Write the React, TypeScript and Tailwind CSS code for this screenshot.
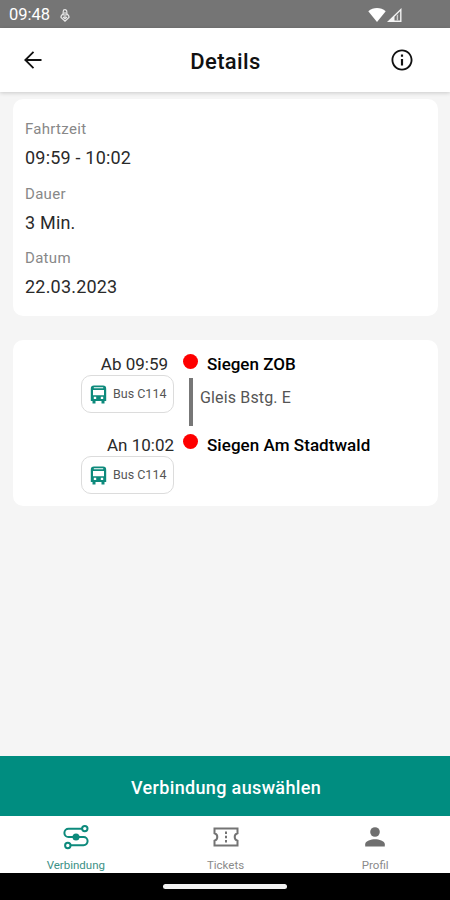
import type { ReactNode } from "react";

const connection = {
  summary: [
    { label: "Fahrtzeit", value: "09:59 - 10:02" },
    { label: "Dauer", value: "3 Min." },
    { label: "Datum", value: "22.03.2023" },
  ],
};

function TouchIcon() {
  return (
    <svg width="10" height="13" viewBox="0 0 10 13" fill="none" stroke="#e8e8e8" strokeWidth="1.2">
      <path d="M3.200 6.500V2.500a1.800 1.800 0 0 1 3.600 0v4M5 3v6" />
      <path d="M3.300 4.800C1.500 5.800.8 7 1 8.500l4 3.600 4-3.600c.2-1.500-.5-2.700-2.300-3.700M3 8l2 1.800L7 8" />
    </svg>
  );
}

function WifiIcon() {
  return (
    <svg width="18" height="14" viewBox="0 0 18 14" fill="#fff">
      <path d="M9 14 .3 3.2C2.8 1.1 5.800 0 9 0s6.200 1.100 8.700 3.200z" />
    </svg>
  );
}

function SignalIcon() {
  return (
    <svg width="15" height="14" viewBox="0 0 15 14">
      <path d="M0 14 14.500 0v14z" fill="#f4f4f4" />
      <path d="M7.500 12.600V8.800l5.600-5.600v9.400z" fill="#757575" />
      <path d="M9.700 12.600V7.600l1.400-1.400v6.400z" fill="#ccc" />
    </svg>
  );
}

function ArrowBackIcon() {
  return (
    <svg width="18" height="18" viewBox="0 0 18 18" fill="none" stroke="#111" strokeWidth="1.800">
      <path d="M17.500 9H1.500M9.500.8 1.300 9l8.200 8.200" />
    </svg>
  );
}

function InfoIcon() {
  return (
    <svg width="26" height="26" viewBox="0 0 24 24" fill="#111">
      <path d="M11 7h2v2h-2zm0 4h2v6h-2zm1-8.700C6.640 2.300 2.300 6.640 2.300 12s4.340 9.700 9.700 9.700 9.700-4.340 9.700-9.700S17.360 2.300 12 2.300zm0 17.700c-4.410 0-8-3.590-8-8s3.590-8 8-8 8 3.590 8 8-3.590 8-8 8z" />
    </svg>
  );
}

function BusIcon() {
  return (
    <svg width="17" height="19" viewBox="0 0 17 19" fill="#0d8a7c">
      <path
        fillRule="evenodd"
        d="M4 .5h9c2.200 0 3.200 1.200 3.200 3.200V16H14.500v2.500H11.500V16h-6v2.500H2.500V16H.8V3.700C.8 1.700 1.800.5 4 .5zM3.800 2.200v1h9.400v-1zM3 5v5.300h11V5zm.8 6.800v2.200h2.400v-2.200zm7 0v2.200h2.400v-2.200z"
      />
    </svg>
  );
}

function RouteIcon() {
  return (
    <svg width="26" height="26" viewBox="0 0 26 26" fill="none" stroke="#0d8a7c" strokeWidth="2">
      <path d="M19 4.800H5.500a4.100 4.100 0 0 0 0 8.200h15a4.100 4.100 0 0 1 0 8.200H8" />
      <circle cx="21.800" cy="4.600" r="2.700" />
      <circle cx="4.800" cy="21.500" r="2.700" />
      <circle cx="13" cy="13" r="3.500" fill="#0d8a7c" stroke="none" />
    </svg>
  );
}

function TicketIcon() {
  return (
    <svg width="26" height="20" viewBox="0 0 26 20" fill="none" stroke="#747474" strokeWidth="2">
      <path d="M1.500 1.500h23v4.800c-1.800.6-2.800 2-2.800 3.700s1 3.100 2.800 3.700v4.800h-23v-4.800c1.800-.6 2.800-2 2.800-3.700s-1-3.100-2.800-3.700z" />
      <path d="M13 4.500v2.500M13 8.800v2.400M13 13v2.500" />
    </svg>
  );
}

function PersonIcon() {
  return (
    <svg width="20" height="20" viewBox="0 0 20 20" fill="#6f6f6f">
      <circle cx="10" cy="5" r="4.800" />
      <path d="M.2 19.500v-2.300c0-3.200 6-5 9.800-5s9.800 1.800 9.800 5v2.300z" />
    </svg>
  );
}

function LineBadge() {
  return (
    <div className="flex h-[38px] w-[93px] items-center gap-[6px] rounded-[10px] border border-[#dcdcdc] pl-[8px] text-[12.500px] text-[#555]">
      <BusIcon />
      <span className="whitespace-nowrap">Bus C114</span>
    </div>
  );
}

function Dot() {
  return <span className="size-[15px] shrink-0 rounded-full bg-[#fe0000]" />;
}

function Tab({ icon, label, active }: { icon: ReactNode; label: string; active?: boolean }) {
  return (
    <button
      className={
        active
          ? "flex flex-1 flex-col items-center pt-2 text-[#3c9186]"
          : "flex flex-1 flex-col items-center pt-2 text-[#8a8a8a]"
      }
    >
      <span className="flex h-[26px] items-center">{icon}</span>
      <span className="mt-[8px] text-[11.500px] leading-[15px]">{label}</span>
    </button>
  );
}

export default function App() {
  return (
    <div className="flex h-[900px] w-[450px] flex-col overflow-hidden bg-[#f5f5f5] font-[Roboto,sans-serif] text-[#2a2a2a]">
      <div className="flex h-7 shrink-0 items-center bg-[#757575] pl-[9px] pr-[48px] pt-[2px] text-white">
        <span className="text-[16.500px] leading-5">09:48</span>
        <span className="ml-[10px]">
          <TouchIcon />
        </span>
        <span className="ml-auto flex gap-[1px]">
          <WifiIcon />
          <SignalIcon />
        </span>
      </div>

      <header className="z-10 flex h-16 shrink-0 items-center bg-white pl-6 pr-[35px] shadow-[0_1px_4px_rgba(0,0,0,0.18)]">
        <span className="w-[26px]">
          <ArrowBackIcon />
        </span>
        <h1 className="flex-1 pl-[12px] pt-[2px] text-center text-[22px] font-medium tracking-[0.35px] text-[#111]">
          Details
        </h1>
        <InfoIcon />
      </header>

      <main className="flex flex-1 flex-col gap-6 pl-[13px] pr-3 pt-[7px]">
        <section className="h-[217px] rounded-[10px] bg-white px-3 pt-[19px]">
          {connection.summary.map((item) => (
            <div key={item.label} className="h-[64.500px]">
              <p className="text-[15px] leading-[22px] tracking-[0.3px] text-[#888]">{item.label}</p>
              <p className="mt-[7px] text-[18px] leading-[22px] tracking-[0.2px]">{item.value}</p>
            </div>
          ))}
        </section>

        <section className="h-[166px] rounded-[10px] bg-white pt-[13px]">
          <div className="flex h-[81px]">
            <div className="flex w-[161px] flex-col items-end">
              <p className="pr-[6px] text-[17px] leading-[22px]">Ab 09:59</p>
              <LineBadge />
            </div>
            <div className="ml-[9px] flex w-[15px] flex-col items-center pt-[1px]">
              <Dot />
              <span className="mt-[9px] h-[48px] w-1 bg-[#777]" />
            </div>
            <div>
              <p className="ml-[9px] text-[17px] font-medium leading-[22px] text-black">Siegen ZOB</p>
              <p className="ml-[2px] mt-[12px] text-[16px] leading-[22px] tracking-[0.150px] text-[#555]">
                Gleis Bstg. E
              </p>
            </div>
          </div>
          <div className="flex">
            <div className="flex w-[161px] flex-col items-end">
              <p className="text-[17px] leading-[22px]">An 10:02</p>
              <LineBadge />
            </div>
            <div className="ml-[9px] flex w-[15px] flex-col">
              <Dot />
            </div>
            <p className="ml-[9px] text-[17px] font-medium leading-[22px] tracking-[0.050px] text-black">
              Siegen Am Stadtwald
            </p>
          </div>
        </section>
      </main>

      <button className="h-[60px] shrink-0 bg-[#008d80] pl-[2px] pt-[2px] text-[18px] font-medium tracking-[0.350px] text-white">
        Verbindung auswählen
      </button>
      <nav className="flex h-[57px] shrink-0 bg-white pl-[1px]">
        <Tab icon={<RouteIcon />} label="Verbindung" active />
        <Tab icon={<TicketIcon />} label="Tickets" />
        <Tab icon={<PersonIcon />} label="Profil" />
      </nav>
      <div className="flex h-[27px] shrink-0 justify-center bg-black pt-[11px]">
        <span className="h-[5px] w-[124px] rounded-full bg-[#f2f2f2]" />
      </div>
    </div>
  );
}
